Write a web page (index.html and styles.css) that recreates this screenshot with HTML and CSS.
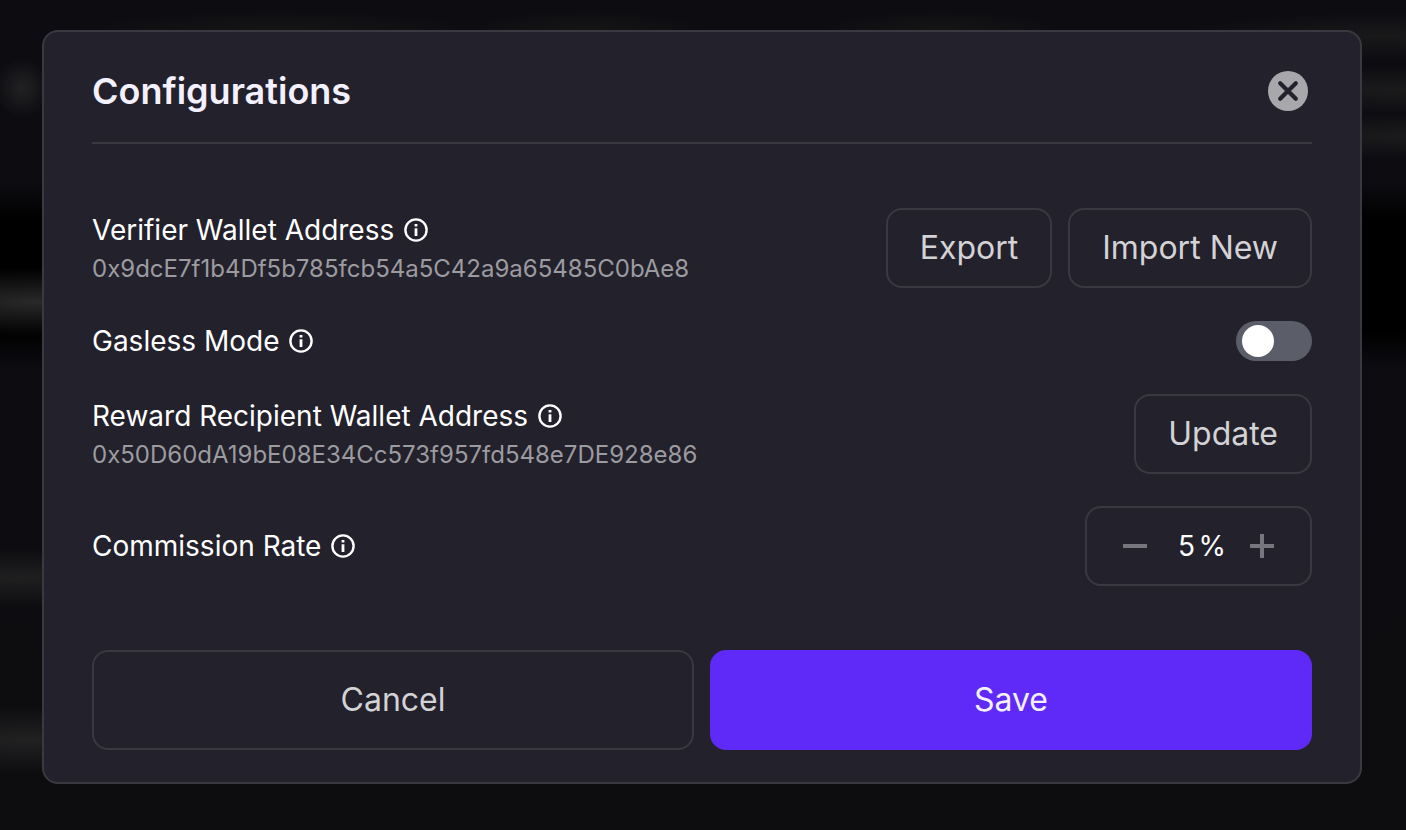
FILE: index.html
```html
<!DOCTYPE html>
<html lang="en">
<head>
    <meta charset="UTF-8">
    <meta name="viewport" content="width=device-width, initial-scale=1.0">
    <title>Configurations</title>
    <link rel="stylesheet" href="styles.css">
</head>
<body>

    <svg class="sprite" aria-hidden="true">
        <symbol id="info" viewBox="0 0 24 24">
            <circle cx="12" cy="12" r="10.6" fill="none" stroke="currentColor" stroke-width="2.4"/>
            <rect x="10.6" y="10.3" width="2.8" height="7.7" fill="currentColor"/>
            <rect x="10.6" y="6" width="2.8" height="2.5" fill="currentColor"/>
        </symbol>
    </svg>

    <form class="modal" role="dialog" aria-labelledby="modalTitle">
        <header class="modal-header">
            <h2 id="modalTitle">Configurations</h2>
            <button type="button" class="close-button" aria-label="Close">
                <svg viewBox="0 0 48 48" width="48" height="48">
                    <circle cx="24" cy="24" r="20" fill="#a8a7ab"/>
                    <path d="M16.2 16.2L31.8 31.8M31.8 16.2L16.2 31.8" stroke="#23212b" stroke-width="4.2" stroke-linecap="round"/>
                </svg>
            </button>
        </header>

        <div class="settings">
            <div class="row">
                <div class="info">
                    <div class="label">Verifier Wallet Address <svg class="info-icon"><use href="#info"/></svg></div>
                    <div class="address">0x9dcE7f1b4Df5b785fcb54a5C42a9a65485C0bAe8</div>
                </div>
                <div class="actions">
                    <button type="button" class="button">Export</button>
                    <button type="button" class="button">Import New</button>
                </div>
            </div>

            <div class="row">
                <label class="label" for="gasless">Gasless Mode <svg class="info-icon"><use href="#info"/></svg></label>
                <input type="checkbox" class="toggle" id="gasless" role="switch">
            </div>

            <div class="row">
                <div class="info">
                    <div class="label">Reward Recipient Wallet Address <svg class="info-icon"><use href="#info"/></svg></div>
                    <div class="address">0x50D60dA19bE08E34Cc573f957fd548e7DE928e86</div>
                </div>
                <button type="button" class="button">Update</button>
            </div>

            <div class="row">
                <label class="label" for="rate">Commission Rate <svg class="info-icon"><use href="#info"/></svg></label>
                <div class="stepper">
                    <button type="button" class="step" aria-label="Decrease">
                        <svg viewBox="0 0 24 24" width="24" height="24"><path d="M0 12H24" stroke="currentColor" stroke-width="4"/></svg>
                    </button>
                    <div class="rate">
                        <input type="text" id="rate" inputmode="numeric" value="5">
                        <span>%</span>
                    </div>
                    <button type="button" class="step" aria-label="Increase">
                        <svg viewBox="0 0 24 24" width="24" height="24"><path d="M0 12H24M12 0V24" stroke="currentColor" stroke-width="4"/></svg>
                    </button>
                </div>
            </div>
        </div>

        <footer class="modal-footer">
            <button type="button" class="button">Cancel</button>
            <button type="submit" class="button save">Save</button>
        </footer>
    </form>

</body>
</html>
```
FILE: styles.css
```css
* {
    box-sizing: border-box;
}
body {
    margin: 0;
    min-height: 100vh;
    padding: 30px 44px 46px 42px;
    font-family: Inter, 'Liberation Sans', sans-serif;
    color: #ffffff;
    /* faint glow of the page behind the dialog */
    background:
        radial-gradient(ellipse 28px 30px at 22px 88px, #222223, transparent),
        radial-gradient(ellipse 200px 34px at 36px 302px, #292929, transparent),
        radial-gradient(ellipse 200px 30px at 20px 578px, #1f1f20, transparent),
        radial-gradient(ellipse 200px 34px at 26px 740px, #212122, transparent),
        radial-gradient(ellipse 200px 20px at 280px 30px, #151515, transparent),
        radial-gradient(ellipse 120px 20px at 586px 30px, #151515, transparent),
        radial-gradient(ellipse 120px 20px at 940px 30px, #151515, transparent),
        radial-gradient(ellipse 200px 24px at 1380px 36px, #19191a, transparent),
        radial-gradient(ellipse 200px 24px at 1400px 90px, #1b1b1c, transparent),
        radial-gradient(ellipse 200px 24px at 1400px 136px, #1b1b1c, transparent),
        linear-gradient(#0d0c11 180px, #000000 220px, #000000 330px, #0d0c11 370px, #0d0d0f);
}
.sprite {
    display: none;
}
.modal {
    padding: 0 48px 32px;
    background-color: #23212b;
    border: 2px solid #3a3840;
    border-radius: 16px;
}
.modal-header {
    display: flex;
    justify-content: space-between;
    align-items: center;
    padding: 35px 0 27px;
    border-bottom: 2px solid #3a3840;
}
h2 {
    margin: 0;
    font-size: 36px;
    font-weight: 600;
    line-height: 48px;
    color: #f3f0ff;
}
button {
    font-family: inherit;
    cursor: pointer;
}
.close-button {
    padding: 0;
    background: none;
    border: none;
}
svg {
    display: block;
}
.settings {
    display: flex;
    flex-direction: column;
    gap: 32px;
    padding: 64px 0;
}
.row {
    display: flex;
    justify-content: space-between;
    align-items: center;
}
.label {
    display: flex;
    align-items: center;
    gap: 10px;
    font-size: 28px;
    line-height: 42px;
}
.info-icon {
    width: 24px;
    height: 24px;
    overflow: visible;
}
.address {
    font-size: 24px;
    line-height: 36px;
    color: #9c9ba0;
}
.actions {
    display: flex;
    gap: 16px;
}
.button {
    height: 80px;
    padding: 0 32px 2px;
    font-size: 32px;
    color: #d3d2d5;
    background-color: transparent;
    border: 2px solid #3a3840;
    border-radius: 16px;
}
.toggle {
    appearance: none;
    display: flex;
    align-items: center;
    width: 76px;
    height: 40px;
    margin: 0;
    padding: 0 6px;
    background-color: #5b5d68;
    border-radius: 20px;
    cursor: pointer;
}
.toggle::before {
    content: "";
    width: 32px;
    height: 32px;
    background-color: #ffffff;
    border-radius: 50%;
}
.toggle:checked {
    justify-content: flex-end;
    background-color: #5f29f7;
}
.stepper {
    display: flex;
    align-items: center;
    gap: 24px;
    height: 80px;
    padding: 0 36px;
    border: 2px solid #3a3840;
    border-radius: 16px;
}
.step {
    padding: 0;
    color: #77757d;
    background: none;
    border: none;
}
.rate {
    display: flex;
    align-items: center;
    font-size: 28px;
}
.rate input {
    width: 28px;
    padding: 0 0 0 4px;
    font: inherit;
    color: inherit;
    text-align: center;
    background: none;
    border: none;
}
.modal-footer {
    display: grid;
    grid-template-columns: 1fr 1fr;
    gap: 16px;
}
.modal-footer .button {
    height: 100px;
}
.modal-footer .save {
    color: #f3f0ff;
    background-color: #5f29f7;
    border-color: #5f29f7;
}
```
